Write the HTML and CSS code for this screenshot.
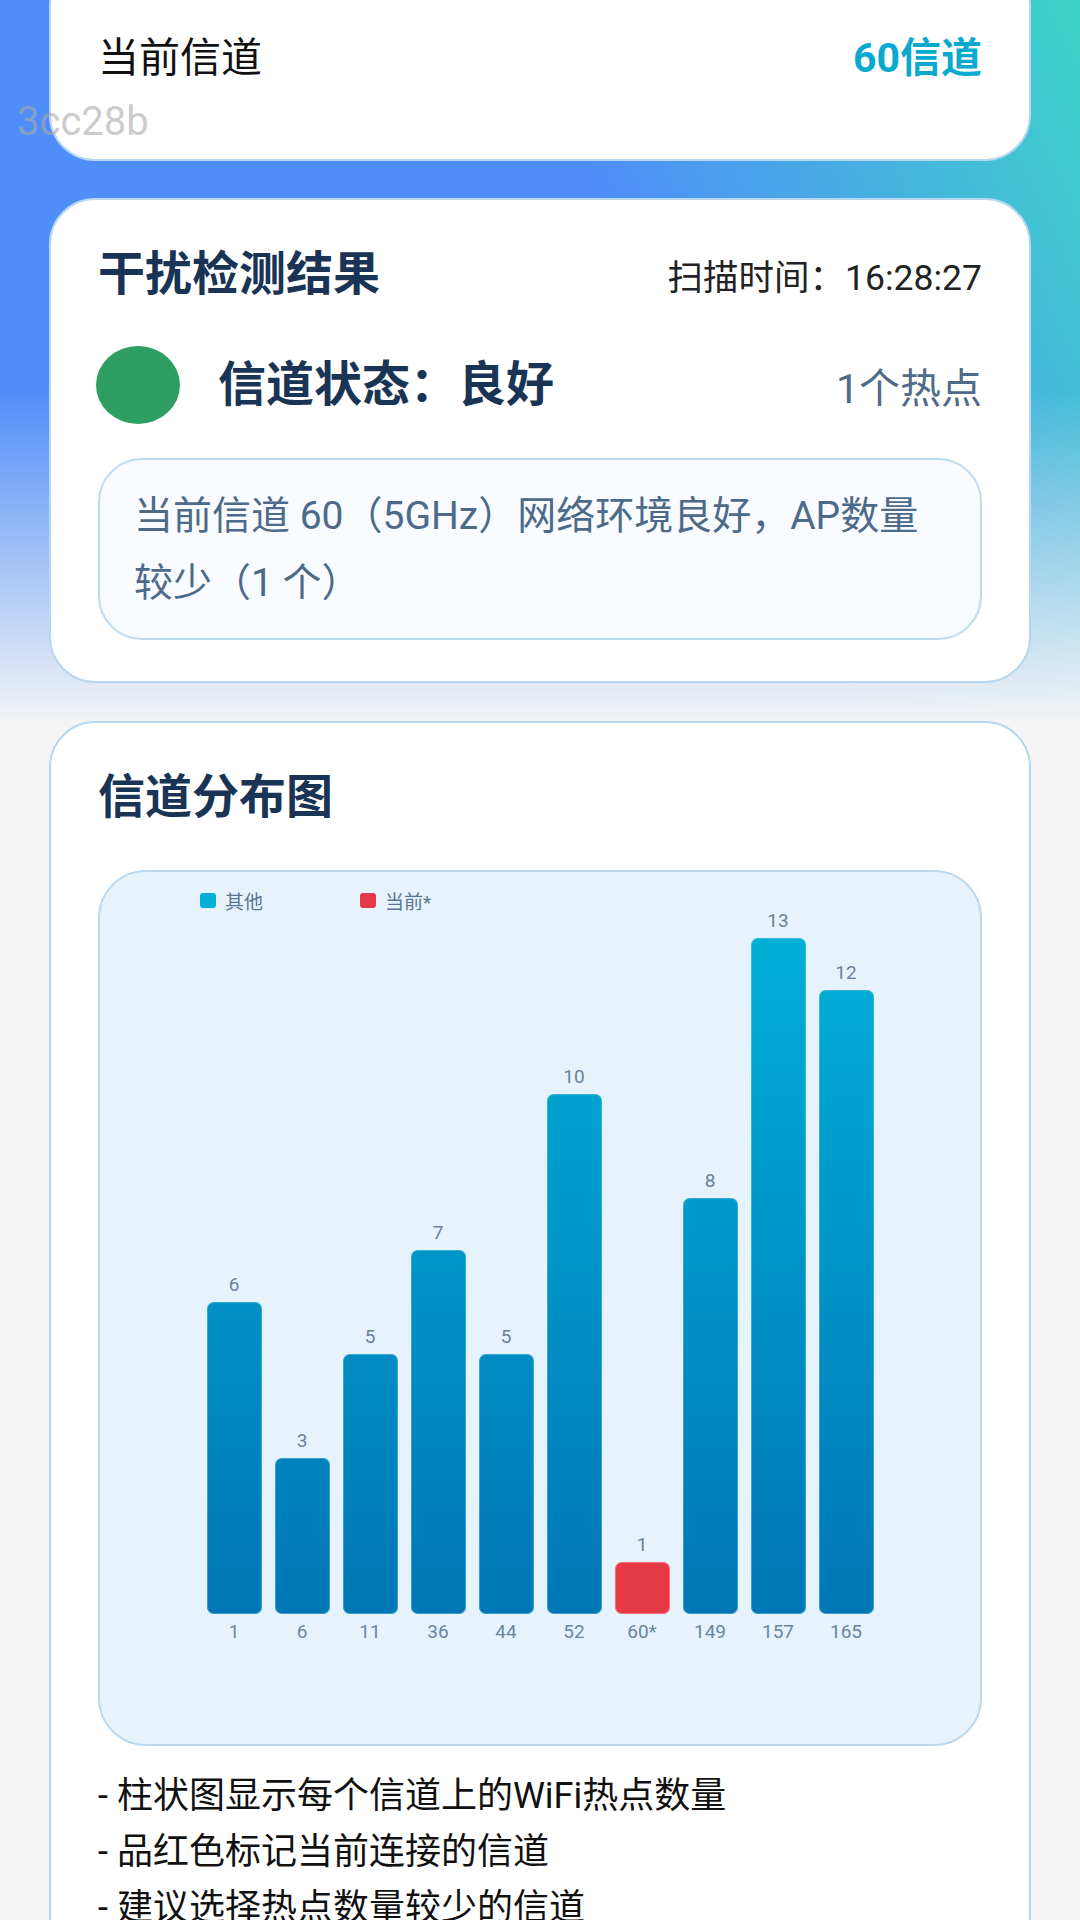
FILE: index.html
```html
<!DOCTYPE html>
<html lang="zh-CN">
<head>
<meta charset="utf-8">
<meta name="viewport" content="width=1080">
<title>信道干扰检测</title>
<link rel="stylesheet" href="styles.css">
</head>
<body>
<div class="page">
  <div class="watermark">3cc28b</div>

  <section class="card card-current">
    <span class="current-label">当前信道</span>
    <span class="current-value">60信道</span>
  </section>

  <section class="card card-result">
    <div class="card-head">
      <h2 class="card-title">干扰检测结果</h2>
      <span class="scan-time">扫描时间：16:28:27</span>
    </div>
    <div class="status-row">
      <span class="status-dot"></span>
      <span class="status-text">信道状态：良好</span>
      <span class="hotspots">1个热点</span>
    </div>
    <div class="status-desc">当前信道 60（5GHz）网络环境良好，AP数量<br>较少（1 个）</div>
  </section>

  <section class="card card-chart">
    <h2 class="card-title">信道分布图</h2>
    <div class="chart">
      <div class="plot">
        <div class="legend">
          <span class="legend-item"><span class="swatch swatch-other"></span>其他</span>
          <span class="legend-item"><span class="swatch swatch-current"></span>当前*</span>
        </div>
        <div class="bars">
          <div class="slot"><span class="val">6</span><div class="bar" style="height:312px"></div><span class="xl">1</span></div>
          <div class="slot"><span class="val">3</span><div class="bar" style="height:156px"></div><span class="xl">6</span></div>
          <div class="slot"><span class="val">5</span><div class="bar" style="height:260px"></div><span class="xl">11</span></div>
          <div class="slot"><span class="val">7</span><div class="bar" style="height:364px"></div><span class="xl">36</span></div>
          <div class="slot"><span class="val">5</span><div class="bar" style="height:260px"></div><span class="xl">44</span></div>
          <div class="slot"><span class="val">10</span><div class="bar" style="height:520px"></div><span class="xl">52</span></div>
          <div class="slot"><span class="val">1</span><div class="bar bar-current" style="height:52px"></div><span class="xl">60*</span></div>
          <div class="slot"><span class="val">8</span><div class="bar" style="height:416px"></div><span class="xl">149</span></div>
          <div class="slot"><span class="val">13</span><div class="bar" style="height:676px"></div><span class="xl">157</span></div>
          <div class="slot"><span class="val">12</span><div class="bar" style="height:624px"></div><span class="xl">165</span></div>
        </div>
      </div>
    </div>
    <ul class="notes">
      <li>- 柱状图显示每个信道上的WiFi热点数量</li>
      <li>- 品红色标记当前连接的信道</li>
      <li>- 建议选择热点数量较少的信道</li>
    </ul>
  </section>
</div>
</body>
</html>
```

FILE: styles.css
```css
* {
  box-sizing: border-box;
  margin: 0;
  padding: 0;
}

html, body {
  width: 1080px;
  height: 1920px;
  overflow: hidden;
}

body {
  font-family: Roboto, "Noto Sans CJK SC", "Noto Sans", sans-serif;
  background: #f5f5f5;
}

.page {
  position: relative;
  display: flow-root;
  height: 1920px;
  padding: 0 49px;
  background:
    linear-gradient(to bottom, rgba(245, 245, 245, 0) 390px, #f5f5f5 725px) top left / 100% 740px no-repeat,
    linear-gradient(65deg, #4f8ef8 0%, #4f8ef8 60%, #3ed4c8 100%) top left / 100% 740px no-repeat,
    #f5f5f5;
}

.watermark {
  position: absolute;
  left: 17px;
  top: 98px;
  z-index: 2;
  font-family: Roboto, sans-serif;
  font-size: 40px;
  line-height: 48px;
  color: rgba(170, 170, 170, 0.6);
}

.card {
  background: #ffffff;
  border: 2px solid #b7d7f0;
  border-radius: 46px;
  padding: 0 47px;
}

.card-current {
  margin-top: -40px;
  height: 201px;
  padding-bottom: 5px;
  display: flex;
  align-items: center;
  justify-content: space-between;
}

.current-label {
  font-size: 41px;
  line-height: 48px;
  color: #111111;
}

.current-value {
  font-size: 41px;
  line-height: 48px;
  font-weight: 700;
  color: #0aa9cf;
}

.card-result {
  margin-top: 37px;
  padding: 46px 47px 41px;
}

.card-head {
  display: flex;
  align-items: center;
  justify-content: space-between;
  height: 56px;
}

.card-title {
  font-size: 47px;
  line-height: 56px;
  font-weight: 700;
  color: #1a3456;
}

.scan-time {
  font-size: 35.5px;
  color: #222222;
}

.status-row {
  display: flex;
  align-items: center;
  margin-top: 44px;
}

.status-dot {
  flex: none;
  width: 84px;
  height: 78px;
  border-radius: 50%;
  background: #2f9e62;
  margin-left: -2px;
  margin-right: 38px;
}

.status-text {
  flex: 1;
  font-size: 48px;
  line-height: 56px;
  font-weight: 700;
  color: #1a3456;
}

.hotspots {
  font-size: 41px;
  color: #4f6b87;
}

.status-desc {
  margin-top: 34px;
  border: 2px solid #bcdaf0;
  background: #f8fbff;
  border-radius: 44px;
  padding: 23px 30px 21px 34px;
  font-size: 39px;
  line-height: 67px;
  color: #4d6a88;
}

.card-chart {
  margin-top: 38px;
  padding: 46px 47px 0;
  height: 1300px;
}

.chart {
  margin-top: 45px;
  height: 876px;
  background: #e6f3fd;
  border: 2px solid #b9d9f0;
  border-radius: 48px;
  padding-top: 16px;
}

.plot {
  width: 680px;
  margin: 0 auto;
}

.legend {
  display: flex;
  align-items: center;
  height: 24px;
  font-size: 19px;
  color: #5a7590;
}

.legend-item {
  display: flex;
  align-items: center;
  width: 160px;
}

.swatch {
  width: 16px;
  height: 15px;
  border-radius: 3px;
  margin-right: 9px;
}

.swatch-other {
  background: #00b0d8;
}

.swatch-current {
  background: #e63946;
}

.bars {
  display: flex;
  align-items: flex-end;
  height: 732px;
}

.slot {
  width: 68px;
  display: flex;
  flex-direction: column;
  align-items: center;
}

.val {
  font-size: 19px;
  line-height: 22px;
  color: #6b829a;
  margin-bottom: 6px;
}

.bar {
  width: 55px;
  border-radius: 7px;
  background: linear-gradient(to bottom, #00afd7, #0076b5) bottom left / 100% 676px no-repeat;
  box-shadow: inset 0 0 0 1px rgba(120, 200, 235, 0.45);
}

.bar-current {
  background: #e63946;
  box-shadow: inset 0 0 0 1px rgba(255, 160, 170, 0.5);
}

.xl {
  font-size: 19px;
  line-height: 24px;
  color: #6a86a0;
  margin-top: 6px;
}

.notes {
  list-style: none;
  margin-top: 22px;
  font-size: 36px;
  line-height: 56px;
  color: #111111;
}
```
